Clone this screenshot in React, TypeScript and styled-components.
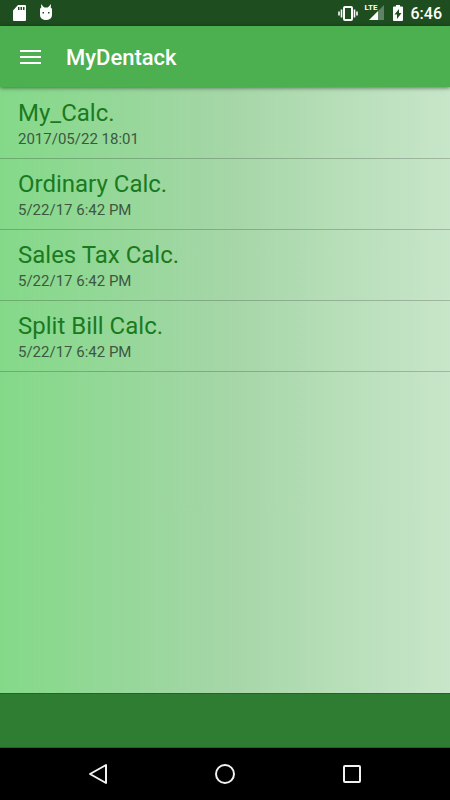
import React from "react";
import styled, { createGlobalStyle } from "styled-components";

const GlobalStyle = createGlobalStyle`
  *, *::before, *::after { box-sizing: border-box; }
  body { margin: 0; font-family: Roboto, "Noto Sans", sans-serif; }
  ul { margin: 0; padding: 0; list-style: none; }
  button { border: 0; margin: 0; padding: 0; background: none; font: inherit; color: inherit; cursor: pointer; }
  svg { display: block; flex: none; }
`;

const Screen = styled.div`
  display: flex;
  flex-direction: column;
  min-height: 100vh;
  background: linear-gradient(to right, #84d989, #a5d6a7 50%, #c8e6c9);
`;

const StatusBar = styled.div`
  display: flex;
  align-items: center;
  justify-content: space-between;
  height: 26px;
  padding: 0 8px 0 12px;
  background: #1e4d1f;
  color: #fff;
`;

const StatusGroup = styled.div<{ $gap: number }>`
  display: flex;
  align-items: center;
  gap: ${({ $gap }) => $gap}px;
`;

const Signal = styled.span`
  position: relative;
  display: block;
`;

const NetworkLabel = styled.span`
  position: absolute;
  top: 0;
  left: 0;
  font: bold 8px/8px "Liberation Sans Narrow", Roboto, sans-serif;
`;

const Clock = styled.time`
  padding-top: 2px;
  font-size: 16px;
  font-weight: 500;
  line-height: 24px;
`;

const AppBar = styled.header`
  display: flex;
  align-items: center;
  gap: 24px;
  height: 61px;
  padding: 2px 18px 0;
  background: #4caf50;
  color: #fff;
  box-shadow: 0 1px 4px rgba(0, 0, 0, 0.5);
`;

const Title = styled.h1`
  margin: 0;
  font-size: 22px;
  font-weight: 500;
  line-height: 28px;
`;

const Content = styled.main`
  flex: 1;
  padding-top: 1px;
`;

const Row = styled.li`
  border-bottom: 1px solid rgba(0, 0, 0, 0.2);
`;

const RowButton = styled.button`
  display: block;
  width: 100%;
  height: 70px;
  padding: 10px 18px 8px;
  text-align: left;
`;

const RowTitle = styled.span`
  display: block;
  font-size: 24px;
  line-height: 30px;
  color: #1b7a20;
`;

const RowDate = styled.span`
  display: block;
  font-size: 15px;
  line-height: 22px;
  color: #3c5840;
`;

const BottomBar = styled.footer`
  height: 55px;
  background: #2e7d32;
  border-top: 1px solid #176b1c;
  border-bottom: 1px solid #246328;
`;

const NavBar = styled.nav`
  display: flex;
  align-items: center;
  justify-content: center;
  gap: 103px;
  height: 52px;
  background: #000;
  color: #f2f2f2;
`;

const SdCardIcon = () => (
  <svg width="16" height="18" viewBox="0 0 16 18" aria-hidden="true">
    <path fill="#fff" fillRule="evenodd" d="M6 1h7a1 1 0 0 1 1 1v14a1 1 0 0 1-1 1H2a1 1 0 0 1-1-1V6.500zM6 3v3h1.500V3zM8.500 3v3H10V3zM11 3v3h1.500V3z" />
  </svg>
);

const AndroidHeadIcon = () => (
  <svg width="16" height="18" viewBox="0 0 16 18" aria-hidden="true">
    <path fill="#fff" d="M2 0 5.500 4 2.500 6zM12 0 8.500 4 11.500 6z" />
    <path fill="#fff" fillRule="evenodd" d="M1 5.500a2 2 0 0 1 2-2h8a2 2 0 0 1 2 2v5.500a5 5 0 0 1-5 5h-2a5 5 0 0 1-5-5zM3.500 8v1.500H5V8zM9 8v1.500h1.500V8z" />
  </svg>
);

const VibrateIcon = () => (
  <svg width="20" height="18" viewBox="0 0 20 18" fill="none" stroke="#fff" aria-hidden="true">
    <rect x="6" y="3" width="8" height="13" rx="1" strokeWidth="2" />
    <path strokeWidth="1.600" d="M3.500 5.500v8M1 7.500v4M16.500 5.500v8M19 7.500v4" />
  </svg>
);

const SignalIcon = () => (
  <svg width="20" height="18" viewBox="0 0 20 18" aria-hidden="true">
    <path fill="#fff" fillOpacity="0.3" d="M19 1v15H13V7z" />
    <path fill="#fff" d="M13 7v9H4z" />
  </svg>
);

const BatteryIcon = () => (
  <svg width="12" height="18" viewBox="0 0 12 18" aria-hidden="true">
    <path fill="#fff" fillRule="evenodd" d="M4 1h4v1.500h2a1 1 0 0 1 1 1V16a1 1 0 0 1-1 1H2a1 1 0 0 1-1-1V3.500a1 1 0 0 1 1-1h2zM7 5 2.500 10.500H5V15l4.500-6H7z" />
  </svg>
);

const MenuIcon = () => (
  <svg width="24" height="18" viewBox="0 0 24 18" aria-hidden="true">
    <path fill="#fff" d="M2 1h21v2H2zM2 7h21v2H2zM2 13h21v2H2z" />
  </svg>
);

const BackIcon = () => (
  <svg width="24" height="24" viewBox="0 0 24 24" aria-hidden="true">
    <path fill="none" stroke="currentColor" strokeWidth="2" strokeLinejoin="round" d="M20 3v18L4 12z" />
  </svg>
);

const HomeIcon = () => (
  <svg width="24" height="24" viewBox="0 0 24 24" aria-hidden="true">
    <circle cx="12" cy="12" r="9" fill="none" stroke="currentColor" strokeWidth="2" />
  </svg>
);

const RecentsIcon = () => (
  <svg width="24" height="24" viewBox="0 0 24 24" aria-hidden="true">
    <rect x="4" y="4" width="16" height="16" rx="1" fill="none" stroke="currentColor" strokeWidth="2" />
  </svg>
);

const calculators = [
  { name: "My_Calc.", date: "2017/05/22 18:01" },
  { name: "Ordinary Calc.", date: "5/22/17 6:42 PM" },
  { name: "Sales Tax Calc.", date: "5/22/17 6:42 PM" },
  { name: "Split Bill Calc.", date: "5/22/17 6:42 PM" },
];

export default function App() {
  return (
    <>
      <GlobalStyle />
      <Screen>
        <StatusBar>
          <StatusGroup $gap={11}>
            <SdCardIcon />
            <AndroidHeadIcon />
          </StatusGroup>
          <StatusGroup $gap={7}>
            <VibrateIcon />
            <Signal>
              <SignalIcon />
              <NetworkLabel>LTE</NetworkLabel>
            </Signal>
            <BatteryIcon />
            <Clock>6:46</Clock>
          </StatusGroup>
        </StatusBar>
        <AppBar>
          <button type="button" aria-label="Open menu">
            <MenuIcon />
          </button>
          <Title>MyDentack</Title>
        </AppBar>
        <Content>
          <ul>
            {calculators.map(({ name, date }) => (
              <Row key={name}>
                <RowButton type="button">
                  <RowTitle>{name}</RowTitle>
                  <RowDate>{date}</RowDate>
                </RowButton>
              </Row>
            ))}
          </ul>
        </Content>
        <BottomBar />
        <NavBar>
          <button type="button" aria-label="Back"><BackIcon /></button>
          <button type="button" aria-label="Home"><HomeIcon /></button>
          <button type="button" aria-label="Recent apps"><RecentsIcon /></button>
        </NavBar>
      </Screen>
    </>
  );
}
